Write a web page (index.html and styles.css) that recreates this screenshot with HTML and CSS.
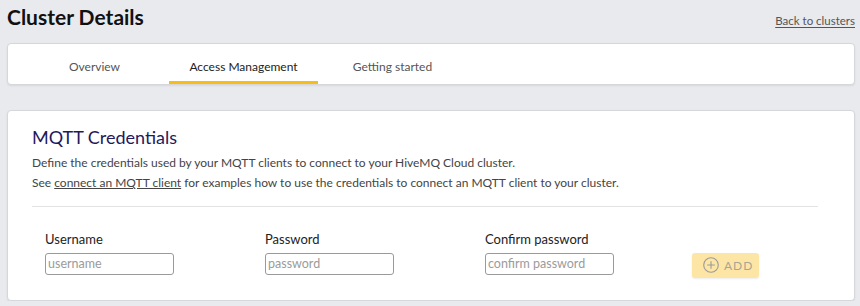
FILE: index.html
```html
<!DOCTYPE html>
<html lang="en">
<head>
    <meta charset="UTF-8">
    <meta name="viewport" content="width=device-width, initial-scale=1.0">
    <title>Cluster Details</title>
    <link rel="stylesheet" href="styles.css">
</head>
<body>

    <div class="page-header">
        <h1>Cluster Details</h1>
        <a href="#" class="back-link">Back to clusters</a>
    </div>

    <nav class="tabs-card">
        <a href="#" class="tab">Overview</a>
        <a href="#" class="tab active">Access Management</a>
        <a href="#" class="tab">Getting started</a>
    </nav>

    <section class="card">
        <h2>MQTT Credentials</h2>
        <p class="intro">
            Define the credentials used by your MQTT clients to connect to your HiveMQ Cloud cluster.<br>
            See <a href="#">connect an MQTT client</a> for examples how to use the credentials to connect an MQTT client to your cluster.
        </p>
        <hr class="divider">

        <form class="cred-form">
            <div class="field">
                <label for="username">Username</label>
                <input type="text" id="username" placeholder="username">
            </div>
            <div class="field">
                <label for="password">Password</label>
                <input type="password" id="password" placeholder="password">
            </div>
            <div class="field">
                <label for="confirm">Confirm password</label>
                <input type="password" id="confirm" placeholder="confirm password">
            </div>
            <button type="button" class="btn-add" disabled>
                <svg width="16" height="16" viewBox="0 0 16 16">
                    <circle cx="8" cy="8" r="7.3" fill="none" stroke="#9a9a9a" stroke-width="1.1"/>
                    <path d="M8 4.2v7.6M4.2 8h7.6" stroke="#9a9a9a" stroke-width="1.1"/>
                </svg>
                ADD
            </button>
        </form>
    </section>

</body>
</html>
```

FILE: styles.css
```css
* {
    margin: 0;
    padding: 0;
    box-sizing: border-box;
    font-family: 'Lato', sans-serif;
}
body {
    background-color: #e8eaee;
    padding: 0 5px 0 7px;
    color: #333;
}
.page-header {
    display: flex;
    justify-content: space-between;
    align-items: baseline;
    padding-top: 4px;
    height: 43px;
}
h1 {
    font-size: 21px;
    font-weight: 700;
    line-height: 1.2;
    color: #111;
}
.back-link {
    font-size: 11.5px;
    color: #555;
    text-decoration: underline;
    text-underline-offset: 2px;
}
.tabs-card {
    display: flex;
    background: white;
    border: 1px solid #d6d7da;
    border-radius: 4px;
    box-shadow: 0 1px 2px rgba(0, 0, 0, 0.08);
    padding: 0 12px;
    height: 42px;
}
.tab {
    width: 149px;
    height: 40px;
    padding-top: 15px;
    font-size: 12px;
    line-height: 16px;
    text-align: center;
    color: #555;
    text-decoration: none;
    border-bottom: 3px solid transparent;
}
.tab.active {
    color: #222;
    border-bottom-color: #f6bd16;
}
.card {
    margin-top: 25px;
    background: white;
    border: 1px solid #d6d7da;
    border-radius: 4px;
    box-shadow: 0 1px 2px rgba(0, 0, 0, 0.08);
    padding: 15px 24px 22px;
    height: 191px;
}
h2 {
    font-size: 18px;
    font-weight: 400;
    line-height: 22px;
    color: #24195c;
    margin-bottom: 5px;
}
.intro {
    font-size: 12px;
    line-height: 20px;
    color: #444;
}
.intro a {
    color: #444;
    text-decoration: underline;
}
.divider {
    border: none;
    border-top: 1px solid #e3e3e3;
    margin: 13px 12px 0 0;
}
.cred-form {
    display: grid;
    grid-template-columns: 220px 220px 207px auto;
    align-items: end;
    padding: 24px 0 0 13px;
}
.field label {
    display: block;
    font-size: 13px;
    line-height: 16px;
    color: #222;
    margin-bottom: 5px;
}
.field input {
    width: 129px;
    height: 22px;
    padding: 0 2px;
    font-size: 12.5px;
    border: 1px solid #9a9a9a;
    border-radius: 3px;
    color: #333;
}
.field input::placeholder {
    color: #9b9b9b;
}
.btn-add {
    display: flex;
    align-items: center;
    gap: 5px;
    width: 67px;
    height: 25px;
    margin-bottom: -3px;
    padding-left: 11px;
    font-size: 12px;
    letter-spacing: 1px;
    color: #a9a594;
    background: #fde6a5;
    border: none;
    border-radius: 3px;
    box-shadow: 0 1px 2px rgba(0, 0, 0, 0.08);
}
```
